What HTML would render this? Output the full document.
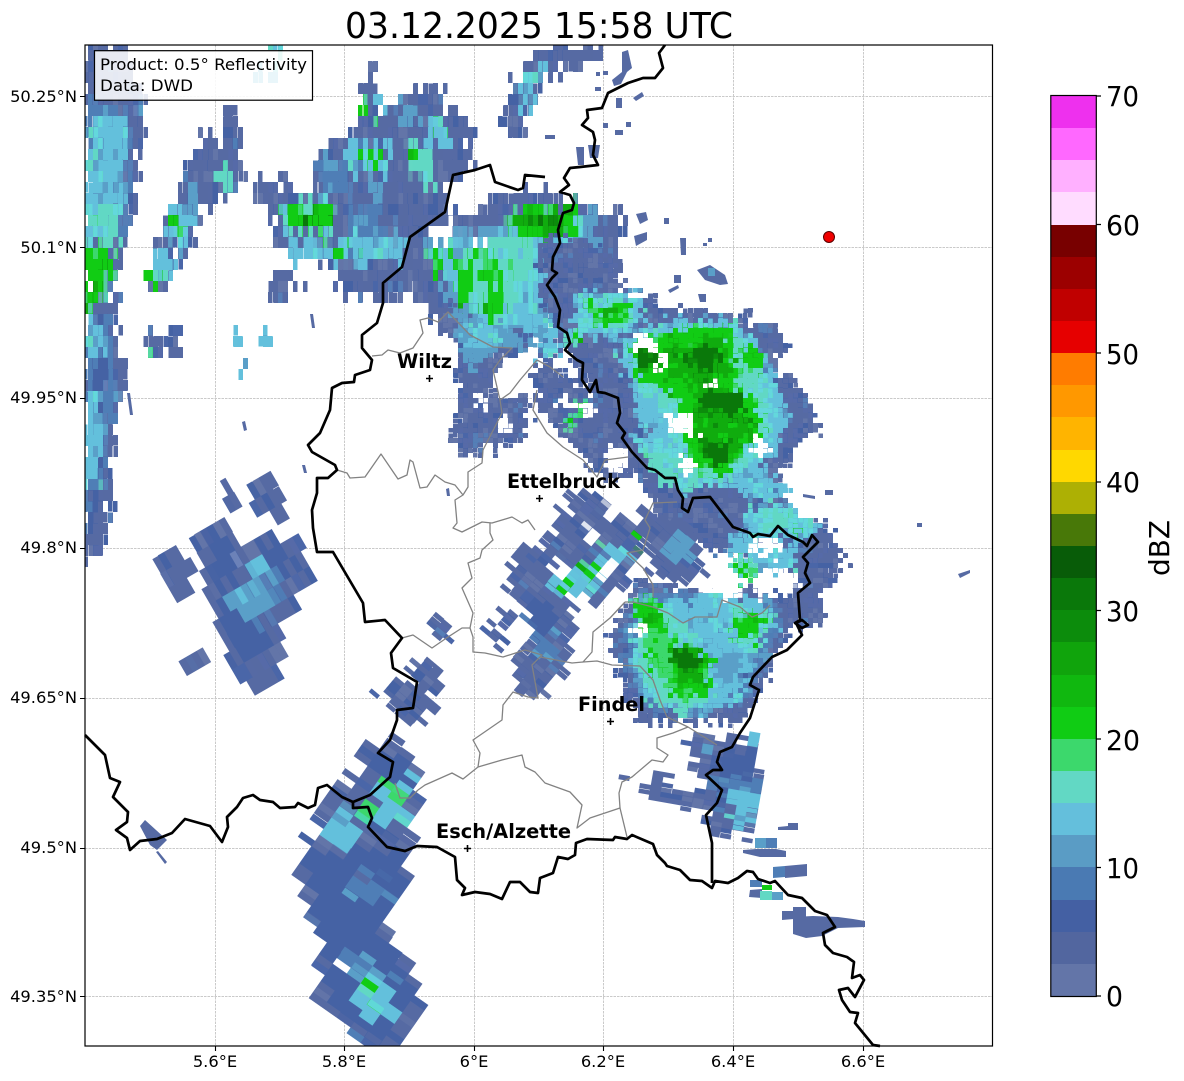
<!DOCTYPE html>
<html><head><meta charset="utf-8"><title>Radar</title>
<style>
html,body{margin:0;padding:0;background:#fff}
svg{display:block}
text{font-family:"DejaVu Sans",sans-serif;fill:#000}
.a{fill:url(#mA)}.b{fill:#4562a4}.c{fill:url(#mC)}.d{fill:#5a9fc8}.e{fill:url(#mE)}.f{fill:url(#mF)}.g{fill:#3cd86c}.h{fill:url(#mH)}.i{fill:url(#mI)}.j{fill:#0a780a}.w{fill:#fff}
.p{fill:#566aa3}
.t{font-size:16.3px}
.cb{font-size:28px}
.city{font-size:19.5px;font-weight:bold}
</style></head><body>
<svg width="1184" height="1081" viewBox="0 0 1184 1081" xmlns="http://www.w3.org/2000/svg">
<defs>
<clipPath id="ax"><rect x="85" y="45" width="908" height="1001"/></clipPath>
<pattern id="mA" patternUnits="userSpaceOnUse" width="41" height="37">
<rect width="41" height="37" fill="#566aa3"/>
<rect x="3" y="4" width="9" height="12" fill="#4562a4"/><rect x="20" y="16" width="7" height="14" fill="#4562a4"/><rect x="30" y="2" width="8" height="9" fill="#4a66a8"/><rect x="8" y="24" width="10" height="8" fill="#4a66a8"/>
<rect x="14" y="3" width="5" height="8" fill="#6375a8"/><rect x="32" y="20" width="6" height="10" fill="#6375a8"/><rect x="2" y="28" width="4" height="7" fill="#6375a8"/>
<rect x="24" y="31" width="5" height="5" fill="#4f7eb6"/>
</pattern>
<pattern id="mC" patternUnits="userSpaceOnUse" width="31" height="29">
<rect width="31" height="29" fill="#4f7eb6"/>
<rect x="3" y="3" width="9" height="9" fill="#4562a4"/><rect x="18" y="14" width="8" height="9" fill="#5a9fc8"/><rect x="22" y="2" width="6" height="7" fill="#566aa3"/><rect x="6" y="19" width="6" height="6" fill="#5a9fc8"/>
</pattern>
<pattern id="mE" patternUnits="userSpaceOnUse" width="37" height="29">
<rect width="37" height="29" fill="#63c0dc"/>
<rect x="2" y="3" width="8" height="8" fill="#5a9fc8"/><rect x="20" y="12" width="9" height="8" fill="#5a9fc8"/><rect x="12" y="14" width="7" height="7" fill="#61d8c4"/><rect x="28" y="2" width="6" height="7" fill="#61d8c4"/><rect x="24" y="22" width="5" height="5" fill="#4f7eb6"/>
</pattern>
<pattern id="mF" patternUnits="userSpaceOnUse" width="33" height="27">
<rect width="33" height="27" fill="#61d8c4"/>
<rect x="3" y="3" width="9" height="7" fill="#63c0dc"/><rect x="20" y="14" width="8" height="9" fill="#63c0dc"/><rect x="14" y="18" width="5" height="5" fill="#3cd86c"/><rect x="24" y="3" width="5" height="6" fill="#3cd86c"/>
</pattern>
<pattern id="mH" patternUnits="userSpaceOnUse" width="31" height="29">
<rect width="31" height="29" fill="#11cc14"/>
<rect x="4" y="4" width="9" height="8" fill="#10b80f"/><rect x="18" y="14" width="8" height="9" fill="#10ac0e"/><rect x="20" y="2" width="5" height="5" fill="#3cd86c"/><rect x="3" y="20" width="6" height="5" fill="#3cd86c"/>
</pattern>
<pattern id="mI" patternUnits="userSpaceOnUse" width="29" height="31">
<rect width="29" height="31" fill="#10ac0e"/>
<rect x="4" y="4" width="8" height="9" fill="#0c8c0c"/><rect x="17" y="16" width="8" height="8" fill="#0c8c0c"/><rect x="18" y="3" width="6" height="6" fill="#11cc14"/><rect x="4" y="20" width="6" height="6" fill="#11cc14"/>
</pattern>
<filter id="f1" filterUnits="userSpaceOnUse" x="-400" y="-400" width="2000" height="2000" color-interpolation-filters="sRGB">
<feTurbulence type="fractalNoise" baseFrequency=".35" numOctaves="2" seed="4" result="n"/>
<feDisplacementMap in="SourceGraphic" in2="n" scale="30" xChannelSelector="R" yChannelSelector="G" result="d"/>
<feFlood x="0" y="0" width="1" height="1" flood-color="#000"/>
<feComposite x="0" y="0" width="5" height="5"/>
<feTile result="t"/>
<feComposite in="d" in2="t" operator="in"/>
<feComponentTransfer><feFuncA type="discrete" tableValues="0 1"/></feComponentTransfer>
<feMorphology operator="dilate" radius="2"/>
</filter>
<filter id="fL" filterUnits="userSpaceOnUse" x="-400" y="-400" width="2000" height="2000" color-interpolation-filters="sRGB">
<feTurbulence type="fractalNoise" baseFrequency=".35 .12" numOctaves="2" seed="9" result="n"/>
<feDisplacementMap in="SourceGraphic" in2="n" scale="34" xChannelSelector="R" yChannelSelector="G" result="d"/>
<feFlood x="0" y="0" width="1" height="1" flood-color="#000"/>
<feComposite x="0" y="0" width="5" height="11"/>
<feTile result="t"/>
<feComposite in="d" in2="t" operator="in"/>
<feComponentTransfer><feFuncA type="discrete" tableValues="0 1"/></feComponentTransfer>
<feMorphology operator="dilate" radius="2 5"/>
</filter>
<filter id="fM" filterUnits="userSpaceOnUse" x="-400" y="-400" width="2000" height="2000" color-interpolation-filters="sRGB">
<feTurbulence type="fractalNoise" baseFrequency=".35 .12" numOctaves="2" seed="14" result="n"/>
<feDisplacementMap in="SourceGraphic" in2="n" scale="30" xChannelSelector="R" yChannelSelector="G" result="d"/>
<feFlood x="0" y="0" width="1" height="1" flood-color="#000"/>
<feComposite x="0" y="0" width="5" height="11"/>
<feTile result="t"/>
<feComposite in="d" in2="t" operator="in"/>
<feComponentTransfer><feFuncA type="discrete" tableValues="0 1"/></feComponentTransfer>
<feMorphology operator="dilate" radius="2 5"/>
</filter>
<filter id="fW" filterUnits="userSpaceOnUse" x="-400" y="-400" width="2000" height="2000" color-interpolation-filters="sRGB">
<feTurbulence type="fractalNoise" baseFrequency=".22 .07" numOctaves="2" seed="21" result="n"/>
<feDisplacementMap in="SourceGraphic" in2="n" scale="24" xChannelSelector="R" yChannelSelector="G" result="d"/>
<feFlood x="0" y="0" width="1" height="1" flood-color="#000"/>
<feComposite x="0" y="0" width="7" height="17"/>
<feTile result="t"/>
<feComposite in="d" in2="t" operator="in"/>
<feComponentTransfer><feFuncA type="discrete" tableValues="0 1"/></feComponentTransfer>
<feMorphology operator="dilate" radius="3 8"/>
</filter>
</defs>
<rect width="1184" height="1081" fill="#fff"/>

<text x="539" y="38" font-size="36" text-anchor="middle" textLength="388" lengthAdjust="spacingAndGlyphs">03.12.2025 15:58 UTC</text>

<!-- grid -->
<g stroke="#cacaca" stroke-width="1" stroke-dasharray="2.5 1" fill="none">
<path d="M215.500 45V1046M344.500 45V1046M474.500 45V1046M603.500 45V1046M733.500 45V1046M863.500 45V1046"/>
<path d="M85 96.500H993M85 247.500H993M85 398.500H993M85 548.500H993M85 698.500H993M85 848.500H993M85 996.500H993"/>
</g>

<g clip-path="url(#ax)">
<!-- west band and north cluster: vertical cells -->
<g filter="url(#fL)">
<path class="a" d="M85 42L122 42L147 107L138 153L134 207L127 247L115 273L114 307L120 347L125 373L120 413L112 430L109 480L110 533L104 550L85 560Z"/>
<path class="c" d="M85 100L137 105L128 170L125 240L85 240Z"/>
<path class="e" d="M92 115L128 120L122 165L120 200L112 240L85 235L85 170Z"/>
<path class="f" d="M85 205L120 205L118 240L85 240Z"/>
<path class="h" d="M85 243L112 243L112 265L105 295L85 320Z"/>
<path class="i" d="M100 255L115 255L113 268L105 268ZM88 285L100 285L100 305L88 305Z"/>
<path class="c" d="M85 320L108 315L115 370L112 420L100 480L85 530Z"/>
<path class="e" d="M85 320L100 320L103 350L85 360ZM85 395L98 395L105 450L90 485L85 480Z"/>
<path class="b" d="M90 365L108 365L108 390L90 390ZM88 490L100 490L100 530L88 530Z"/>

<path class="a" d="M230 105L242 150L242 177L228 197L198 210L192 250L175 253L173 285L153 288L150 257L165 217L172 197L188 193L188 163L200 133L215 143L225 140L223 120Z"/>
<path class="e" d="M165 210L190 208L188 240L170 250Z"/>
<path class="h" d="M169 222L180 220L180 240L170 242Z"/>
<path class="e" d="M152 255L172 255L170 277L152 280Z"/>
<path class="h" d="M151 265L157 265L157 288L152 288Z"/>
<path class="f" d="M213 167L228 165L227 187L213 187Z"/>
<path class="g" d="M216 172L225 172L224 185L216 185Z"/>
<path class="d" d="M190 187L196 187L196 207L190 207Z"/>

<path class="a" d="M252 180L265 172L275 183L288 167L288 193L312 190L318 163L338 137L350 137L365 113L363 90L372 65L380 67L373 97L383 87L383 110L402 100L432 83L448 107L472 127L472 153L468 173L453 177L447 212L478 215L488 200L518 192L545 196L580 203L600 212L623 216L625 237L620 260L583 267L560 300L520 330L480 345L460 320L432 323L425 303L410 290L383 300L368 292L348 300L332 270L305 257L272 250L278 215L258 195Z"/>
<path class="c" d="M318 160L345 160L345 190L318 195ZM345 205L380 200L385 240L345 240Z"/>
<path class="e" d="M284 240L330 243L360 238L400 236L402 258L360 264L300 258Z"/>
<path class="f" d="M283 203L332 200L335 232L283 232Z"/>
<path class="h" d="M284 208L330 205L330 230L284 230Z"/>
<path class="j" d="M306 212L330 212L330 222L306 222Z"/>
<path class="h" d="M325 243L358 243L358 255L325 255Z"/>
<path class="e" d="M345 141L385 141L385 173L347 173Z"/>
<path class="h" d="M357 150L382 150L380 165L358 165Z"/>
<path class="f" d="M405 143L432 148L435 183L410 178Z"/>
<path class="h" d="M405 148L420 148L420 160L405 160Z"/>
<path class="e" d="M428 120L450 120L450 147L430 147Z"/>
<path class="h" d="M435 122L442 122L442 134L435 134Z"/>
<path class="h" d="M364 98L371 98L371 115L364 115Z"/>
<path class="e" d="M376 93L382 93L382 110L376 110Z"/>
<path class="d" d="M402 107L415 107L415 127L402 127Z"/>
<path class="d" d="M372 183L382 183L382 200L372 200Z"/>
<path class="d" d="M425 240L470 232L545 215L590 215L600 260L565 280L545 340L490 345L450 315Z"/>
<path class="e" d="M432 250L500 236L560 210L582 225L570 265L545 290L530 335L490 335L460 305Z"/>
<path class="f" d="M450 262L510 238L540 225L530 285L500 330L470 300Z"/>
<path class="h" d="M430 250L445 250L450 275L433 280ZM455 262L470 262L470 310L455 310ZM478 255L500 255L505 310L485 325Z"/>
<path class="h" d="M505 225L525 207L575 205L578 235L550 240L525 240Z"/>
<path class="i" d="M520 212L570 210L570 232L525 236Z"/>
<path class="j" d="M528 215L555 213L555 225L530 228Z"/>
<path class="f" d="M570 218L583 218L583 243L570 243Z"/>
<path class="h" d="M570 225L578 225L578 238L570 238Z"/>
<path class="w" d="M432 226L448 226L448 243L432 243ZM474 240L485 240L485 250L474 250Z"/>

<path class="a" d="M502 118L510 100L525 70L545 42L600 42L605 55L585 60L575 75L570 65L555 70L540 85L530 115L525 137L503 128Z"/>
<path class="e" d="M510 115L525 85L540 60L555 50L540 75L530 100L520 115Z"/>
<path class="e" d="M270 42L292 42L290 50L272 50Z"/>
<path class="e" d="M257 70L278 72L276 84L257 80Z"/>
<path class="a" d="M272 270L290 270L292 307L272 307ZM300 277L306 277L306 293L300 293ZM148 327L163 327L163 360L148 360ZM172 323L183 323L183 355L172 355Z"/>
<path class="e" d="M235 325L240 325L248 372L243 372Z"/>
<path class="g" d="M153 345L158 345L158 358L153 358Z"/>
<path class="e" d="M265 322L270 322L270 345L265 345Z"/>
</g>

<!-- central column -->
<g filter="url(#f1)">
<path class="a" d="M432 300L500 330L530 335L515 360L500 355L490 385L500 400L525 395L530 420L518 440L500 452L490 440L485 445L460 455L450 440L458 400L460 380L455 350Z"/>
<path class="d" d="M450 312L510 330L525 345L500 350L470 372Z"/>
<path class="e" d="M462 318L505 335L490 345L470 350Z"/>
<path class="w" d="M498 418L506 414L512 428L504 432ZM474 395L480 392L484 405L478 408Z"/>
<path class="a" d="M535 370L545 355L565 375L600 400L640 470L610 480L590 465L560 430L540 410L532 385Z"/>

<!-- east storm -->
<path class="a" d="M610 270L633 297L657 293L660 307L707 310L737 320L743 307L753 327L777 322L788 343L773 370L793 378L810 403L818 420L815 433L793 443L795 457L777 467L787 507L827 527L833 547L852 562L833 570L835 580L823 593L823 622L808 625L790 625L790 575L770 560L740 555L700 545L660 520L640 480L620 460L590 390L555 330L575 300Z"/>
<path class="a" d="M540 240L583 240L620 260L610 280L575 300L560 330L540 300Z"/>
<path class="e" d="M575 295L640 295L645 320L610 340L575 330Z"/>
<path class="f" d="M583 298L635 298L632 322L605 332L585 325Z"/>
<path class="h" d="M587 303L630 303L628 320L605 327L590 320Z"/>
<path class="i" d="M597 308L618 308L615 318L600 318Z"/>
<path class="e" d="M540 323L557 323L557 357L540 357Z"/>
<path class="f" d="M567 330L583 330L583 343L567 343Z"/>
<path class="h" d="M572 333L580 333L580 341L572 341Z"/>
<path class="e" d="M637 397L650 397L650 423L637 423Z"/>
<path class="e" d="M617 350L650 325L700 320L740 325L760 345L775 380L790 420L775 450L760 470L790 490L770 500L730 495L700 490L680 490L640 445L650 430L640 400Z"/>
<path class="f" d="M625 352L655 335L700 325L735 328L755 350L770 390L770 430L755 460L725 480L695 480L680 455L665 420L650 395Z"/>
<path class="h" d="M627 345L650 335L700 325L730 325L735 350L740 385L760 410L765 430L740 455L725 475L695 470L685 440L680 400L640 380Z"/>
<path class="i" d="M632 345L660 345L700 340L725 332L730 370L725 400L755 420L750 440L725 465L700 465L692 435L695 390L660 370L635 370Z"/>
<path class="j" d="M635 350L655 350L655 365L638 368ZM688 348L718 343L720 372L700 375L688 360ZM698 393L738 388L748 418L725 418L702 408ZM698 448L728 443L728 463L705 463Z"/>
<path class="h" d="M742 345L760 345L765 372L745 372Z"/>
<path class="a" d="M700 483L747 490L745 520L700 515Z"/>
<path class="e" d="M747 507L790 505L817 525L815 540L747 540Z"/>
<path class="f" d="M760 510L790 510L790 530L760 530Z"/>
<path class="h" d="M790 528L797 528L797 536L790 536Z"/>
<path class="e" d="M727 537L753 537L753 553L727 553ZM757 547L797 547L797 570L757 570Z"/>
<path class="f" d="M633 433L700 470L700 490L660 480Z"/>
<path class="w" d="M668 415L697 415L697 432L668 432ZM682 457L693 457L693 472L682 472ZM753 440L767 440L767 452L753 452ZM637 337L653 337L653 347L637 347ZM655 353L668 353L668 365L655 365ZM707 383L713 383L713 388L707 388ZM753 542L780 542L780 552L753 552ZM560 397L573 397L573 410L560 410ZM585 398L593 398L593 413L585 413ZM607 447L627 447L627 467L607 467Z"/>
<path class="h" d="M577 400L585 400L585 413L577 413ZM567 417L575 417L575 430L567 430Z"/>

<!-- lower east storm -->
<path class="a" d="M700 590L730 583L773 593L803 600L793 620L787 643L773 657L767 677L753 700L740 722L640 722L618 670L608 637L630 607L635 580Z"/>
<path class="c" d="M640 590L700 595L770 600L785 625L770 650L745 700L700 715L645 710L625 670L620 640Z"/>
<path class="e" d="M698 595L760 600L775 625L755 650L740 700L690 712L650 700L630 670L635 610Z"/>
<path class="f" d="M635 600L660 600L700 640L710 700L680 712L650 700L635 660ZM730 605L775 615L755 650L730 640Z"/>
<path class="g" d="M640 605L660 605L670 640L710 670L710 695L680 704L660 680L645 650Z"/>
<path class="h" d="M632 597L660 600L668 632L655 642L638 628ZM670 640L712 655L712 692L682 702L667 680ZM732 610L772 615L756 642L732 642ZM645 650L662 650L665 672L650 672Z"/>
<path class="i" d="M640 610L655 610L655 628L642 625ZM670 642L703 647L706 678L682 692L672 670Z"/>
<path class="j" d="M672 647L703 652L703 670L680 670Z"/>
<path class="d" d="M715 650L745 650L740 680L715 680Z"/>
<path class="w" d="M687 567L753 567L735 600L700 590L690 590ZM757 573L797 573L795 593L757 593ZM632 625L650 630L650 635L632 632Z"/>
<path class="f" d="M733 560L753 560L753 580L733 580Z"/>
<path class="h" d="M737 563L750 563L750 578L737 578Z"/>
</g>

<!-- middle Luxembourg, azimuthal cells -->
<g transform="rotate(-50 580 580)"><g filter="url(#fM)"><g transform="rotate(50 580 580)">
<path class="a" d="M575 495L605 490L625 515L650 530L635 560L625 590L590 600L570 590L545 575L540 545Z"/>
<path class="a" d="M640 510L685 522L700 545L705 570L675 585L650 570Z"/>
<path class="a" d="M505 570L520 550L545 545L575 600L572 640L560 665L563 680L550 682L535 700L518 690L515 660L528 640L525 610L508 595Z"/>
<path class="b" d="M525 600L560 610L555 650L530 665Z"/>
<path class="c" d="M535 635L555 630L555 660L535 665Z"/>
<path class="d" d="M665 535L690 540L695 560L670 565Z"/>
<path class="e" d="M550 578L595 565L615 545L630 555L590 592L560 595Z"/>
<path class="w" d="M547 560L563 565L563 578L547 572ZM583 527L603 530L603 547L585 545ZM610 500L625 505L620 520L605 515ZM600 568L612 560L618 572L605 580Z"/>
<path class="h" d="M553 580L570 580L570 590L553 590ZM573 577L583 577L583 583L573 583ZM580 565L595 565L595 577L580 577ZM603 547L610 547L610 555L603 555ZM633 530L643 530L643 543L633 543Z"/>
<path class="a" d="M428 615L445 618L453 640L438 645ZM480 630L495 625L503 642L490 652ZM498 610L510 607L518 625L505 628Z"/>
<path class="a" d="M383 690L400 680L415 685L408 660L428 660L448 678L432 700L440 705L425 722L405 722L400 712L385 695Z"/>
</g></g></g>

<!-- west-mid blob -->
<g transform="rotate(-30 240 590)"><g filter="url(#fW)"><g transform="rotate(30 240 590)">
<path class="a" d="M188 542L213 527L225 523L248 553L252 537L268 527L288 537L308 547L317 587L302 597L282 627L285 650L282 670L252 693L227 667L223 647L210 613L208 587L198 563Z"/>
<path class="a" d="M158 570L168 550L185 550L192 593L183 600L165 580Z"/>
<path class="a" d="M248 488L262 480L275 480L290 515L272 520L255 507Z"/>
<path class="a" d="M225 483L240 503L228 507Z"/>
<path class="a" d="M180 667L200 640L207 660L188 673L195 685Z"/>
<path class="b" d="M212 590L250 590L275 650L245 670L225 635ZM255 540L285 555L280 575L255 565ZM205 530L230 540L235 575L215 570Z"/>
<path class="c" d="M238 590L262 565L275 570L280 600L262 615L250 630L235 610Z"/>
<path class="d" d="M232 605L260 575L272 590L258 615L245 620Z"/>
<path class="e" d="M253 560L270 560L270 570L253 572ZM240 598L256 590L258 605L245 612Z"/>
<path class="w" d="M228 537L232 535L240 565L236 567Z"/>
</g></g></g>

<!-- south-west lobe -->
<g transform="rotate(-55 360 890)"><g filter="url(#fW)"><g transform="rotate(55 360 890)">
<path class="a" d="M355 748L397 740L430 770L418 807L413 837L405 847L412 860L408 887L390 912L385 945L412 965L422 1008L412 1032L398 1050L368 1050L318 1003L315 982L323 943L302 897L295 858L307 843L318 830L322 807L342 783L365 773Z"/>
<path class="b" d="M305 850L405 850L410 870L385 915L382 945L400 970L415 990L395 1040L370 1040L330 1000L325 945L310 900Z"/>
<path class="c" d="M345 880L395 865L390 890L350 910ZM345 950L380 960L370 985L345 975Z"/>
<path class="b" d="M365 750L395 750L420 775L400 785L375 775Z"/>
<path class="e" d="M318 830L338 803L362 817L348 843L328 843Z"/>
<path class="e" d="M378 780L412 780L405 820L378 820Z"/>
<path class="f" d="M385 785L405 785L402 810L385 808Z"/>
<path class="g" d="M386 790L402 795L400 805L388 803Z"/>
<path class="g" d="M358 800L372 803L372 820L358 815Z"/>
<path class="d" d="M372 863L382 863L382 877L372 877ZM368 953L378 953L378 977L368 977Z"/>
<path class="e" d="M360 977L395 977L395 1020L362 1017Z"/>
<path class="h" d="M367 980L382 983L382 995L368 995Z"/>
<path class="g" d="M372 1003L385 1003L385 1013L372 1013Z"/>
<path class="w" d="M377 892L387 895L386 899L376 896ZM345 967L362 975L360 979L343 971Z"/>
</g></g></g>

<!-- south-east -->
<g transform="rotate(-80 720 790)"><g filter="url(#fM)"><g transform="rotate(80 720 790)">
<path class="a" d="M683 748L693 733L758 742L755 753L762 780L760 787L758 820L745 837L715 835L707 825L708 813L706 780L697 772L690 757Z"/>
<path class="a" d="M640 790L655 773L665 777L673 790L710 793L710 812L682 810L657 800Z"/>
<path class="p" d="M605 767L612 767L633 777L630 780L612 775Z"/>
<path class="b" d="M717 753L757 753L757 777L717 777Z"/>
<path class="c" d="M710 777L760 777L760 797L710 797Z"/>
<path class="e" d="M730 788L753 788L753 827L730 827Z"/>
<path class="d" d="M703 750L713 750L713 757L703 757Z"/>
<path class="e" d="M743 732L760 732L760 740L743 740ZM753 775L762 775L762 782L753 782Z"/>
</g></g></g>
<!-- tiny echoes -->
<g>
<path class="p" d="M778 827L788 826L788 823L798 823L798 830L778 830Z"/>
<path fill="#5a9fc8" d="M755 838L766 838L766 848L755 848Z"/>
<path fill="#4f7eb6" d="M766 838L777 838L777 848L766 848Z"/>
<path class="p" d="M743 850L756 849L776 849L786 851L786 857L760 857L743 853Z"/>
<path fill="#4f7eb6" d="M773 867L785 866L785 877L773 878Z"/>
<path class="p" d="M785 866L807 864L807 876L785 878Z"/>
<path fill="#4f7eb6" d="M750 880L762 880L762 887L750 887Z"/>
<path class="p" d="M750 890L762 889L762 898L749 897Z"/>
<path fill="#11cc14" d="M762 885L772 885L772 890L762 890Z"/>
<path fill="#61d8c4" d="M760 891L772 891L772 900L760 900Z"/>
<path fill="#5a9fc8" d="M772 892L783 892L783 900L772 900Z"/>
<path class="p" d="M782 911L793 911L793 907L806 907L806 918L782 920Z"/>
<path class="p" d="M793 917L813 916L838 917L853 919L865 921L865 927L838 928L822 936L806 938L793 934Z"/>
<path class="w" d="M838 928H865V929H838Z"/>
<path class="p" d="M825 490H833V495H825ZM803 494L815 496V499L803 497ZM917 523H922V527H917ZM958 574L970 570V573L960 578Z"/>
<path class="p" d="M140 826L145 820L167 840L157 850L150 845ZM156 852L158 851L167 862L165 864Z"/>
<path class="p" d="M127 393L130 393L133 415L130 415ZM242 422L245 421L247 430L244 431ZM302 465L305 465L307 473L304 473ZM446 489L449 488L450 496L447 496ZM310 314L313 314L315 328L312 328Z"/>
<path class="p" d="M596 72H600V76H596ZM603 71H608V75H603ZM595 87H601V91H595ZM622 52L628 50L632 68L627 72L621 84L614 86L612 80L622 72ZM616 98H622V108H616ZM633 98L642 92L644 96L636 101ZM603 123H608V128H603ZM626 122H631V127H626ZM615 130H623V135H615ZM545 135H555V139H545ZM576 147H584V165H578ZM588 145H600L598 158H590ZM636 214L646 212L648 220L640 224ZM634 236L647 232V240L636 246ZM664 218H669V224H664ZM680 238H686L686 255H681ZM708 238H712V242H708ZM703 243H707V246H703ZM674 275H681V283H674ZM668 290L678 285L679 288L670 293ZM698 294H706V302H700Z"/>
<path class="p" d="M697 270L710 265L725 275L728 284L720 285L705 280Z"/>
<path fill="#5a9fc8" d="M708 268L715 268L715 276L708 276Z"/>
</g>
</g>

<!-- gray canton lines -->
<g fill="none" stroke="#828282" stroke-width="1.3" stroke-linejoin="round">
<path d="M372 356L382 355L388 350L400 353L413 348L423 333L420 320L428 318L438 322L448 312L470 335L493 347L512 348L500 360L493 370L500 400L502 413L483 450L482 463L468 472L468 487L463 495L455 500L457 523L453 528L462 532L482 522L492 523L512 517L522 523L528 520L535 530"/>
<path d="M337 470L347 473L350 478L365 477L381 454L398 479L407 475L410 460L413 462L420 488L427 487L435 475L445 482L455 485L463 495"/>
<path d="M537 360L520 380L510 393L500 400M537 360L550 367L563 377"/>
<path d="M537 390L533 410L547 433L563 447L583 460L597 477L605 460L628 457"/>
<path d="M677 502L653 503L645 520L650 528L643 550L627 553L643 568L653 585L653 597"/>
<path d="M625 602L633 602L653 607L668 613L683 623L695 617L717 617L722 600L740 607L752 617L762 613L770 605"/>
<path d="M625 602L610 618L593 632L592 652L583 662L597 661L612 665L640 666L653 680L660 700L667 717L688 727L717 745"/>
<path d="M583 662L572 663L540 657"/>
<path d="M490 523L490 533L493 540L482 550L480 558L468 563L472 578L462 588L473 613L470 628L473 637L473 652L485 653L503 657L525 650L542 655L532 665L538 698L528 697L513 692L503 705L502 720L473 740L480 753L478 767L463 779L452 773L425 785L418 790"/>
<path d="M470 628L462 628L448 637L432 648L413 635L402 638"/>
<path d="M478 767L502 760L522 755L525 767L535 772L545 783L570 792L582 805L577 828L590 818L620 808L627 837"/>
<path d="M620 808L619 793L622 782L632 777L652 760L663 762L668 755L657 748L657 738L673 733L688 727"/>
<path d="M395 783L400 798L410 798L418 790"/>
</g>

<!-- black borders -->
<g fill="none" stroke="#000" stroke-width="2.7" stroke-linejoin="round">
<path d="M665 45L659 53L663 68L655 78L643 78L628 83L608 93L602 108L587 110L588 118L582 125L593 132L595 140L593 155L598 165L580 167L570 168L564 178L569 185L560 192L570 195L574 203L572 210L563 213L558 230L560 243L553 257L552 270L557 273L552 278L547 285L555 297L560 310L558 327L567 333L570 343L565 350L577 360L583 363L582 380L590 392L596 380L598 392L605 393L618 398L620 413L617 423L625 433L622 438L632 452L647 468L655 470L665 478L675 478L678 490L683 498L682 508L688 512L693 498L710 497L733 527L750 533L753 537L758 534L770 536L778 526L788 535L803 542L807 546L812 535L818 542L803 557L808 563L805 573L810 583L798 593L800 620L795 623L802 628L808 625L802 620L796 623L802 635L787 650L772 657L753 677L750 685L759 690L750 718L740 733L732 747L720 752L717 762L722 770L713 770L706 775L722 790L717 803L706 815L712 843L712 883"/>
<path d="M545 177L525 175L523 188L518 190L495 182L490 165L475 170L453 175L445 212L410 237L402 267L383 283L383 303L377 323L362 335L362 348L372 360L370 370L355 375L354 382L342 383L332 388L330 410L320 433L308 445L312 452L335 465L337 470L328 478L317 478L317 493L312 510L313 528L317 552L333 552L363 603L365 622L385 620L402 638L391 653L393 668L417 682L413 708L397 710L397 720L390 740L378 753L393 762L390 777L370 795L353 802L353 808L368 807L372 818L368 827L387 847L405 851L417 846L437 847L455 857L457 880L465 888L462 895L475 892L490 894L502 899L510 882L520 882L530 892L538 893L540 878L553 873L558 857L568 859L575 855L576 843L587 839L613 840L615 837L627 839L632 835L653 844L657 855L665 863L667 866L680 870L690 880L702 881L712 888L715 881L728 883L738 878L747 871L753 872L758 879L770 883L775 881L788 895L802 898L815 911L827 915L835 927L823 933L825 945L833 953L847 957L854 962L852 978L860 975L864 980L855 997L848 988L839 990L842 1000L850 1012L858 1013L855 1023L873 1045L880 1046"/>
<path d="M85 735L105 755L110 778L120 782L113 797L128 812L127 822L116 830L127 838L130 850L140 841L157 839L172 833L185 819L210 826L222 842L228 827L227 817L237 807L243 798L253 795L260 800L273 802L280 808L295 807L298 803L308 808L315 805L318 788L327 785L342 797L353 802"/>
</g>

<!-- markers -->
<g stroke="#000" stroke-width="1.6" fill="none">
<path d="M426 378.500H433M429.500 375V382"/>
<path d="M536 498.500H543M539.500 495V502"/>
<path d="M607 721.500H614M610.500 718V725"/>
<path d="M464 848.500H471M467.500 845V852"/>
</g>
<text class="city" x="397" y="368" textLength="55" lengthAdjust="spacingAndGlyphs">Wiltz</text>
<text class="city" x="507" y="488" textLength="113" lengthAdjust="spacingAndGlyphs">Ettelbruck</text>
<text class="city" x="578" y="711" textLength="67" lengthAdjust="spacingAndGlyphs">Findel</text>
<text class="city" x="436" y="838" textLength="135" lengthAdjust="spacingAndGlyphs">Esch/Alzette</text>

<circle cx="829" cy="237" r="5.5" fill="#f00000" stroke="#5a0000" stroke-width="1"/>

<!-- legend -->
<rect x="94.500" y="50.700" width="218" height="49.500" fill="#fff" fill-opacity=".86" stroke="#000" stroke-width="1.2"/>
<text class="t" x="100" y="70" textLength="207" lengthAdjust="spacingAndGlyphs">Product: 0.5° Reflectivity</text>
<text class="t" x="100" y="91" textLength="93" lengthAdjust="spacingAndGlyphs">Data: DWD</text>

<!-- axes frame -->
<rect x="85" y="45" width="907.500" height="1001" fill="none" stroke="#000" stroke-width="1.2"/>
<g stroke="#000" stroke-width="1.1">
<path d="M215.500 1046V1051M344.500 1046V1051M474.500 1046V1051M603.500 1046V1051M733.500 1046V1051M863.500 1046V1051"/>
<path d="M80 96.500H85M80 247.500H85M80 398.500H85M80 548.500H85M80 698.500H85M80 848.500H85M80 996.500H85"/>
</g>
<g text-anchor="middle">
<text class="t" x="215" y="1067">5.6°E</text>
<text class="t" x="344" y="1067">5.8°E</text>
<text class="t" x="474" y="1067">6°E</text>
<text class="t" x="603" y="1067">6.2°E</text>
<text class="t" x="733" y="1067">6.4°E</text>
<text class="t" x="863" y="1067">6.6°E</text>
</g>
<g text-anchor="end">
<text class="t" x="77" y="102">50.25°N</text>
<text class="t" x="77" y="253">50.1°N</text>
<text class="t" x="77" y="403">49.95°N</text>
<text class="t" x="77" y="553">49.8°N</text>
<text class="t" x="77" y="703">49.65°N</text>
<text class="t" x="77" y="853">49.5°N</text>
<text class="t" x="77" y="1002">49.35°N</text>
</g>

<!-- colourbar -->
<g shape-rendering="crispEdges">
<rect x="1051" y="964" width="45" height="32.500" fill="#6375a8"/>
<rect x="1051" y="932" width="45" height="32" fill="#52669f"/>
<rect x="1051" y="900" width="45" height="32" fill="#4460a3"/>
<rect x="1051" y="867" width="45" height="33" fill="#4a7ab3"/>
<rect x="1051" y="835" width="45" height="32" fill="#5a9cc5"/>
<rect x="1051" y="803" width="45" height="32" fill="#64bfdc"/>
<rect x="1051" y="771" width="45" height="32" fill="#62d8c4"/>
<rect x="1051" y="739" width="45" height="32" fill="#3cd86c"/>
<rect x="1051" y="707" width="45" height="32" fill="#10cc14"/>
<rect x="1051" y="675" width="45" height="32" fill="#10b80f"/>
<rect x="1051" y="642" width="45" height="33" fill="#10a40c"/>
<rect x="1051" y="610" width="45" height="32" fill="#0c8c0c"/>
<rect x="1051" y="578" width="45" height="32" fill="#0a780a"/>
<rect x="1051" y="546" width="45" height="32" fill="#085c08"/>
<rect x="1051" y="514" width="45" height="32" fill="#487808"/>
<rect x="1051" y="482" width="45" height="32" fill="#adb004"/>
<rect x="1051" y="450" width="45" height="32" fill="#ffd800"/>
<rect x="1051" y="417" width="45" height="33" fill="#ffb400"/>
<rect x="1051" y="385" width="45" height="32" fill="#ff9800"/>
<rect x="1051" y="353" width="45" height="32" fill="#ff7c00"/>
<rect x="1051" y="321" width="45" height="32" fill="#e60000"/>
<rect x="1051" y="289" width="45" height="32" fill="#c00000"/>
<rect x="1051" y="257" width="45" height="32" fill="#9c0000"/>
<rect x="1051" y="225" width="45" height="32" fill="#780000"/>
<rect x="1051" y="192" width="45" height="33" fill="#ffdcff"/>
<rect x="1051" y="160" width="45" height="32" fill="#ffb0ff"/>
<rect x="1051" y="128" width="45" height="32" fill="#ff68ff"/>
<rect x="1051" y="96" width="45" height="32" fill="#ee30ee"/>
</g>
<rect x="1050.800" y="95.500" width="45.500" height="901" fill="none" stroke="#000" stroke-width="1.2"/>
<path d="M1096 96H1101M1096 224.500H1101M1096 353H1101M1096 482H1101M1096 610.500H1101M1096 739H1101M1096 867.500H1101M1096 996H1101" stroke="#000" stroke-width="1.2"/>
<g>
<text class="cb" x="1106" y="106" textLength="33" lengthAdjust="spacingAndGlyphs">70</text>
<text class="cb" x="1106" y="235" textLength="34" lengthAdjust="spacingAndGlyphs">60</text>
<text class="cb" x="1106" y="364" textLength="33" lengthAdjust="spacingAndGlyphs">50</text>
<text class="cb" x="1106" y="492" textLength="34" lengthAdjust="spacingAndGlyphs">40</text>
<text class="cb" x="1106" y="621" textLength="33" lengthAdjust="spacingAndGlyphs">30</text>
<text class="cb" x="1106" y="750" textLength="34" lengthAdjust="spacingAndGlyphs">20</text>
<text class="cb" x="1106" y="878" textLength="33" lengthAdjust="spacingAndGlyphs">10</text>
<text class="cb" x="1106" y="1006" textLength="17" lengthAdjust="spacingAndGlyphs">0</text>
</g>
<text class="cb" transform="translate(1169 548) rotate(-90)" text-anchor="middle" textLength="56" lengthAdjust="spacingAndGlyphs">dBZ</text>
</svg>
</body></html>
